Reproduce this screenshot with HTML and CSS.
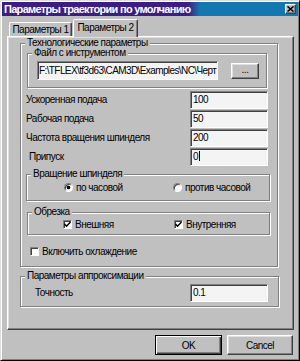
FILE: index.html
```html
<!DOCTYPE html>
<html lang="ru">
<head>
    <meta charset="UTF-8">
    <meta name="viewport" content="width=device-width, initial-scale=1.0">
    <title>Параметры траектории по умолчанию</title>
    <link rel="stylesheet" href="styles.css">
</head>
<body>
    <div class="window">
        <div class="titlebar">
            <span class="title">Параметры траектории по умолчанию</span>
            <span class="close-btn">
                <svg width="7" height="6" viewBox="0 0 7 6"><path d="M0.5 0.5 L6.5 5.5 M6.5 0.5 L0.5 5.5" stroke="#000" stroke-width="1.6" fill="none"/></svg>
            </span>
        </div>

        <div class="tabs">
            <div class="tab">Параметры 1</div>
            <div class="tab active">Параметры 2</div>
        </div>

        <div class="panel">
            <div class="group group-tech">
                <div class="caption">Технологические параметры</div>

                <div class="group group-file">
                    <div class="caption">Файл с инструментом</div>
                    <div class="file-row">
                        <div class="edit edit-path">F:\TFLEX\tf3d63\CAM3D\Examples\NC\Черт</div>
                        <div class="btn btn-browse">...</div>
                    </div>
                </div>

                <div class="fields">
                    <span class="label">Ускоренная подача</span>
                    <div class="edit">100</div>
                    <span class="label">Рабочая подача</span>
                    <div class="edit">50</div>
                    <span class="label">Частота вращения шпинделя</span>
                    <div class="edit">200</div>
                    <span class="label label-indent">Припуск</span>
                    <div class="edit">0<span class="caret"></span></div>
                </div>

                <div class="group group-spin">
                    <div class="caption">Вращение шпинделя</div>
                    <div class="options options-spin">
                        <label class="option"><span class="radio checked"></span>по часовой</label>
                        <label class="option"><span class="radio"></span>против часовой</label>
                    </div>
                </div>

                <div class="group group-cut">
                    <div class="caption">Обрезка</div>
                    <div class="options options-cut">
                        <label class="option"><span class="check"><svg width="7" height="7" viewBox="0 0 7 7"><path d="M0.5 3 L2.5 5.2 L6.5 1" stroke="#000" stroke-width="1.5" fill="none"/></svg></span>Внешняя</label>
                        <label class="option"><span class="check"><svg width="7" height="7" viewBox="0 0 7 7"><path d="M0.5 3 L2.5 5.2 L6.5 1" stroke="#000" stroke-width="1.5" fill="none"/></svg></span>Внутренняя</label>
                    </div>
                </div>

                <label class="option cooling"><span class="check"></span>Включить охлаждение</label>
            </div>

            <div class="group group-approx">
                <div class="caption">Параметры аппроксимации</div>
                <div class="approx-row">
                    <span class="label">Точность</span>
                    <div class="edit">0.1</div>
                </div>
            </div>
        </div>

        <div class="buttons">
            <div class="btn btn-default">OK</div>
            <div class="btn btn-cancel">Cancel</div>
        </div>
    </div>
</body>
</html>
```

FILE: styles.css
```css
* {
    box-sizing: border-box;
}

body {
    margin: 0;
    font-family: "Liberation Sans", Arial, sans-serif;
    font-size: 10px;
    letter-spacing: -0.5px;
    color: #000;
    background: #c0c0c0;
}

.window {
    width: 300px;
    height: 361px;
    padding: 1px;
    background: #c0c0c0;
    border: 1px solid;
    border-color: #dfdfdf #000 #000 #dfdfdf;
    box-shadow: inset 1px 1px 0 #fff, inset -1px -1px 0 #808080;
}

/* title bar */
.titlebar {
    display: flex;
    align-items: center;
    justify-content: space-between;
    height: 14px;
    padding: 0 2px 0 2px;
    background: linear-gradient(to right, #3c1e82 0, #3c1e82 186px, #1478b0 198px, #1478b0 100%);
    color: #fff;
    font-size: 11px;
    font-weight: bold;
    letter-spacing: -0.7px;
    white-space: nowrap;
}

.close-btn {
    display: flex;
    align-items: center;
    justify-content: center;
    width: 11px;
    height: 10px;
    background: #c0c0c0;
    border: 1px solid;
    border-color: #fff #404040 #404040 #fff;
    box-shadow: inset -1px -1px 0 #808080;
}

/* tabs */
.tabs {
    display: flex;
    align-items: flex-end;
    height: 17px;
    margin-top: 3px;
    padding-left: 7px;
}

.tab {
    display: flex;
    align-items: center;
    justify-content: center;
    width: 63px;
    height: 14px;
    border: 1px solid;
    border-bottom: none;
    border-color: #fff #404040 transparent #fff;
    border-radius: 2px 2px 0 0;
    box-shadow: inset -1px 0 0 #808080;
    white-space: nowrap;
}

.tab.active {
    position: relative;
    z-index: 1;
    width: 65px;
    height: 18px;
    margin-left: 1px;
    margin-bottom: -1px;
    padding-bottom: 3px;
    background: #c0c0c0;
}

/* tab page */
.panel {
    height: 294px;
    margin: 0 4px 0 5px;
    padding: 0 15px 0 12px;
    border: 1px solid;
    border-color: #fff #404040 #404040 #fff;
    box-shadow: inset -1px -1px 0 #808080, inset 1px 1px 0 #dfdfdf;
}

/* group boxes */
.group {
    border: 1px solid #808080;
    box-shadow: 1px 1px 0 #fff, inset 1px 1px 0 #fff;
}

.caption {
    display: table;
    margin: -6px 0 0 4px;
    padding: 0 2px;
    line-height: 10px;
    background: #c0c0c0;
    white-space: nowrap;
}

.group-tech {
    margin-top: 6px;
    padding-bottom: 9px;
}

.group-file {
    margin: 5px 10px 0 6px;
    padding-bottom: 7px;
}

.file-row {
    display: flex;
    align-items: center;
    height: 19px;
    margin-top: 3px;
    padding-left: 9px;
}

.edit {
    width: 78px;
    height: 18px;
    padding-left: 2px;
    line-height: 16px;
    background: #f4f4f4;
    border: 1px solid;
    border-color: #808080 #fff #fff #808080;
    box-shadow: inset 1px 1px 0 #404040;
    white-space: nowrap;
    overflow: hidden;
}

.edit-path {
    width: 181px;
    height: 19px;
    line-height: 17px;
    padding-left: 1px;
    letter-spacing: -0.6px;
}

.caret {
    display: inline-block;
    width: 1px;
    height: 10px;
    margin-left: 1px;
    vertical-align: -1px;
    background: #000;
}

.btn {
    display: flex;
    align-items: center;
    justify-content: center;
    background: #c0c0c0;
    border: 1px solid;
    border-color: #fff #404040 #404040 #fff;
    box-shadow: inset -1px -1px 0 #808080, inset 1px 1px 0 #dfdfdf;
}

.btn-browse {
    width: 28px;
    height: 16px;
    margin-left: 13px;
    padding-bottom: 3px;
}

.fields {
    display: grid;
    grid-template-columns: 1fr 78px;
    grid-auto-rows: 19px;
    align-items: start;
    margin-top: 3px;
    padding: 0 9px 0 5px;
}

.label {
    line-height: 18px;
    white-space: nowrap;
}

.label-indent {
    padding-left: 3px;
}

.group-spin {
    margin: 7px 7px 0 5px;
    padding-bottom: 7px;
}

.group-cut {
    margin: 11px 7px 0 6px;
    padding-bottom: 4px;
}

.options {
    display: grid;
    height: 12px;
    align-items: center;
}

.options-spin {
    grid-template-columns: 109px auto;
    margin-top: 2px;
    padding-left: 37px;
}

.options-cut {
    grid-template-columns: 111px auto;
    margin-top: 1px;
    padding-left: 35px;
}

.option {
    display: flex;
    align-items: center;
    gap: 3px;
    white-space: nowrap;
}

.radio {
    width: 9px;
    height: 9px;
    border-radius: 50%;
    background: #fff;
    border: 1px solid;
    border-color: #808080 #fff #fff #808080;
    box-shadow: inset 1px 1px 0 #404040;
}

.radio.checked {
    background: radial-gradient(circle, #000 0, #000 1.5px, #fff 2.2px);
}

.check {
    display: flex;
    align-items: center;
    justify-content: center;
    width: 9px;
    height: 9px;
    background: #fff;
    border: 1px solid;
    border-color: #808080 #fff #fff #808080;
    box-shadow: inset 1px 1px 0 #404040;
}

.cooling {
    height: 12px;
    margin-top: 10px;
    padding-left: 9px;
}

.group-approx {
    margin: 9px -1px 0 0;
    padding-bottom: 4px;
}

.approx-row {
    display: flex;
    align-items: center;
    justify-content: space-between;
    height: 18px;
    margin-top: 3px;
    padding: 0 10px 0 14px;
}

/* dialog buttons */
.buttons {
    display: flex;
    justify-content: flex-end;
    gap: 5px;
    margin-top: 5px;
    padding-right: 5px;
}

.buttons .btn {
    height: 20px;
}

.btn-default {
    width: 67px;
    border-color: #000;
    box-shadow: inset 1px 1px 0 #fff, inset -1px -1px 0 #404040, inset -2px -2px 0 #808080;
}

.btn-cancel {
    width: 66px;
}
```
